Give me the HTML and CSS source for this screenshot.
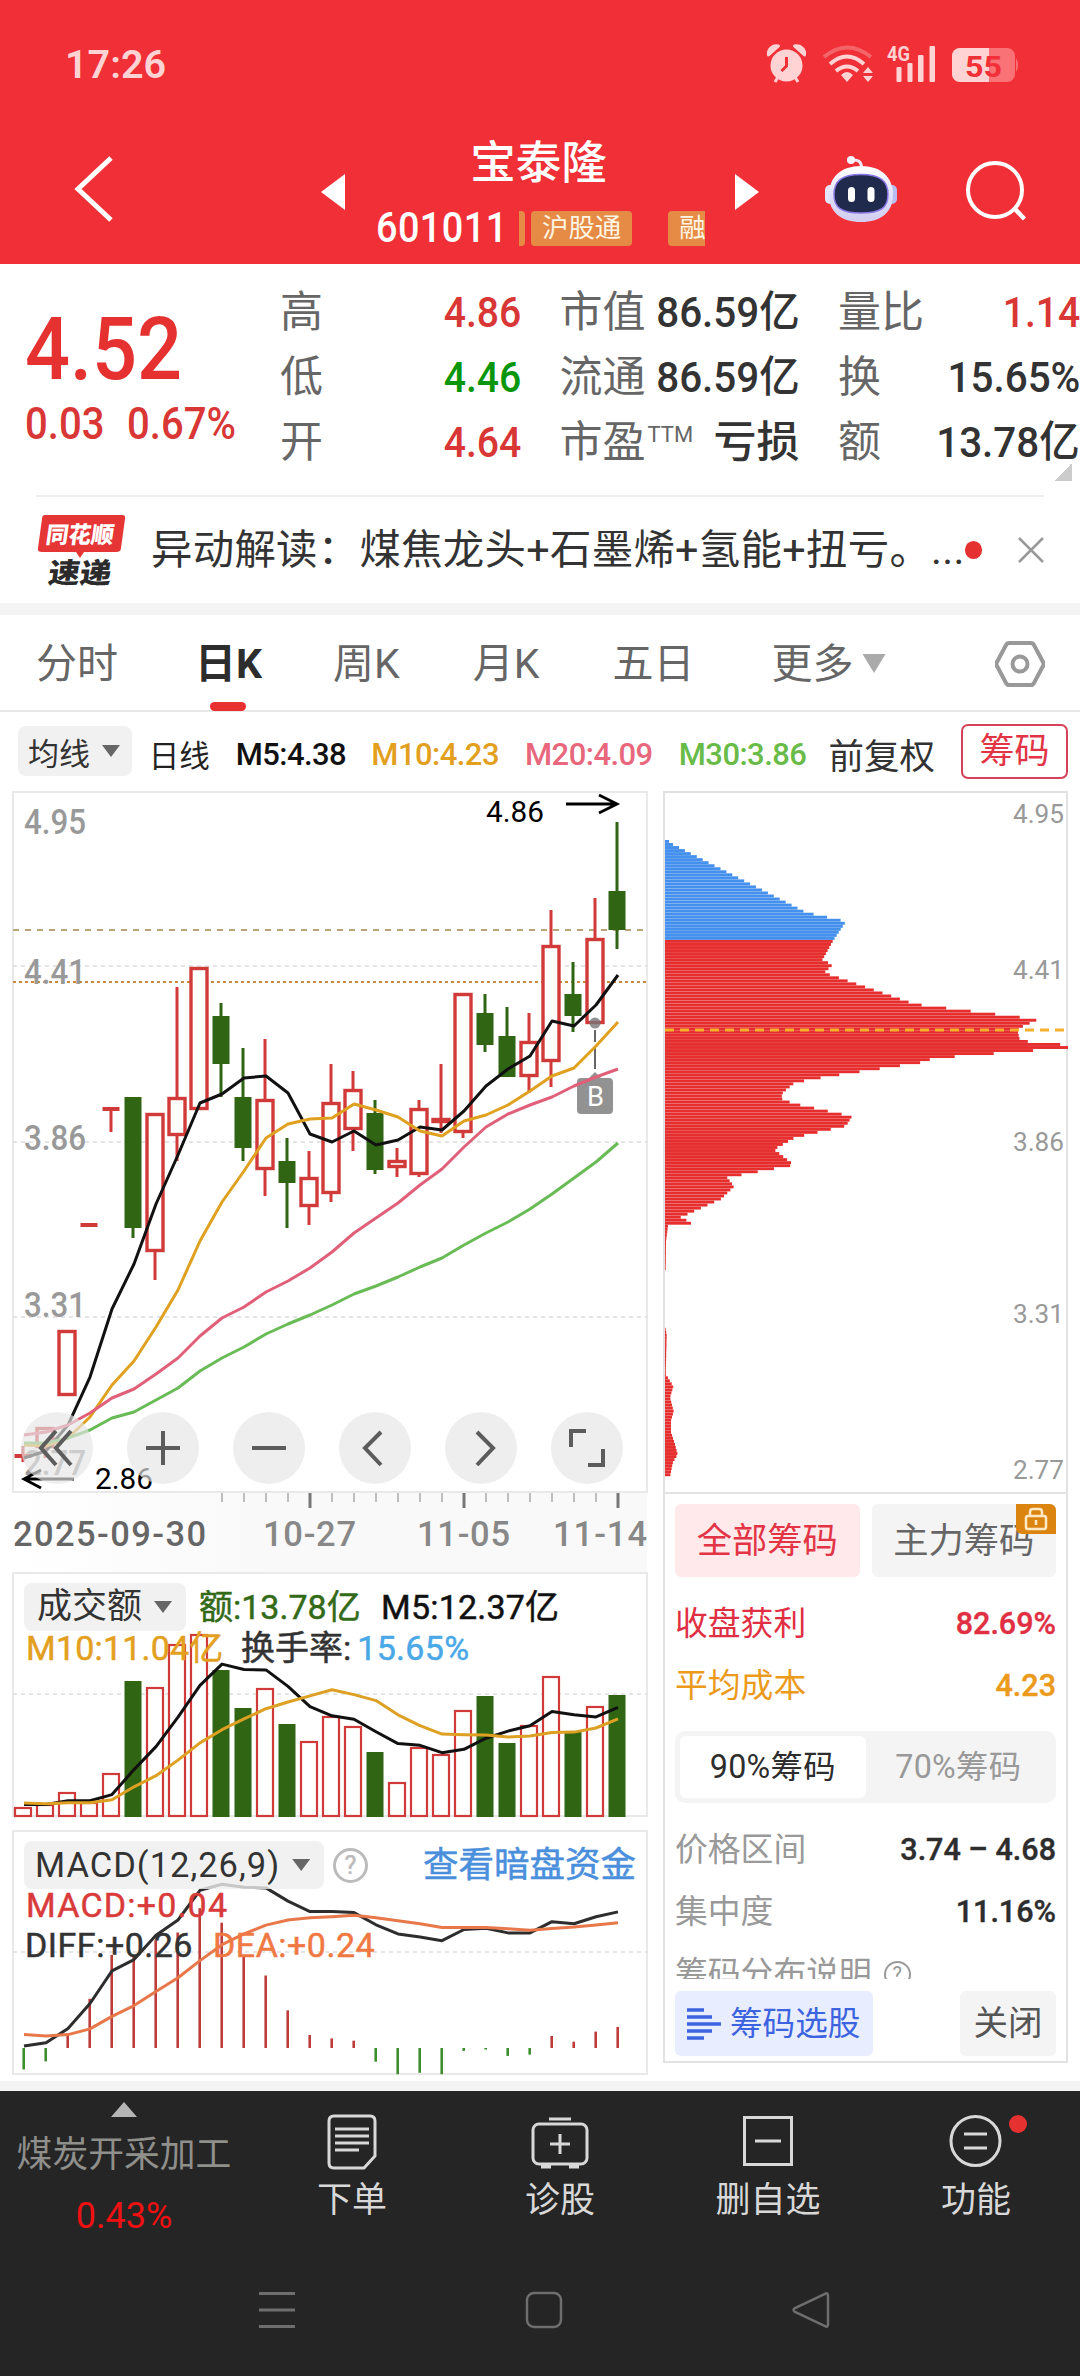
FILE: index.html
```html
<!DOCTYPE html>
<html lang="zh-CN">
<head>
<meta charset="utf-8">
<title>宝泰隆 601011</title>
<link rel="stylesheet" href="styles.css">
</head>
<body>
<header class="top">
  <div class="status">
    <span class="clock">17:26</span>
    <svg class="status-icons" viewBox="764 40 260 50" width="260" height="50">
      <g fill="#ffd3d4">
        <circle cx="786.500" cy="65.500" r="16"/>
        <path d="M768.500 55a8 8 0 0 1 10-9zM804.500 55a8 8 0 0 0-10-9zM778 77l-3 5M795 77l3 5" stroke="#ffd3d4" stroke-width="3" stroke-linejoin="round"/>
        <path d="M786.500 57v9l-5 5" fill="none" stroke="#f03036" stroke-width="3"/>
        <path d="M824 57q23-19 47 0" fill="none" stroke="#f4656a" stroke-width="4"/>
        <path d="M830 64q17-15 34 0M836 71q11-9 22 0" fill="none" stroke="#ffd3d4" stroke-width="4"/>
        <path d="M841 75q6-6 12 0l-6 7zM863 73l5-6 5 6zM863 76h10l-5 6z"/>
        <rect x="896.500" y="67" width="5" height="15" rx="1"/><rect x="907.500" y="63" width="5" height="19" rx="1"/><rect x="918" y="55" width="5.500" height="27" rx="1"/><rect x="929.500" y="46" width="5.500" height="36" rx="1"/>
        <text x="887" y="61" font-size="21" font-weight="700" textLength="23" lengthAdjust="spacingAndGlyphs">4G</text>
        <rect x="952" y="48" width="63" height="34" rx="8" fill="#f87276"/>
        <path d="M1016 58q4 7 0 14z" fill="#f87276"/>
        <path d="M960 48h29v34h-29a8 8 0 0 1-8-8v-18a8 8 0 0 1 8-8z"/>
        <text x="965" y="76.500" font-size="30" font-weight="700" fill="#f03036" textLength="37" lengthAdjust="spacingAndGlyphs">55</text>
      </g>
    </svg>
  </div>
  <div class="titlebar">
    <svg class="back" viewBox="0 0 40 70" width="40" height="70"><path d="M37 5L4 36l33 31" fill="none" stroke="#fff" stroke-width="5"/></svg>
    <svg class="prev" viewBox="0 0 24 36" width="24" height="36"><path d="M24 0v36L0 18z" fill="#fff"/></svg>
    <div class="stock">
      <h1>宝泰隆</h1>
      <div class="code-row">
        <span class="code">601011</span>
        <span class="tags"><i class="tag sliver"></i><i class="tag">沪股通</i><i class="tag last">融</i></span>
      </div>
    </div>
    <svg class="next" viewBox="0 0 24 36" width="24" height="36"><path d="M0 0v36l24-18z" fill="#fff"/></svg>
    <svg class="robot" viewBox="824 152 76 74" width="76" height="74">
      <defs><linearGradient id="shell" x1="0" y1="0" x2="0" y2="1"><stop offset="0" stop-color="#fff"/><stop offset=".6" stop-color="#dcdcf8"/><stop offset="1" stop-color="#d3cdf0"/></linearGradient></defs>
      <path d="M852 160q9-1 9.500 7" fill="none" stroke="#f3e6f3" stroke-width="3"/>
      <circle cx="851" cy="160" r="4" fill="#f6f2fc"/>
      <rect x="825" y="185" width="10" height="19" rx="5" fill="#e4e5fb"/><rect x="887" y="185" width="10" height="19" rx="5" fill="#babdf0"/>
      <path d="M861 166c20 0 32 11 32 29 0 17-12 27-32 27s-32-10-32-27c0-18 12-29 32-29z" fill="url(#shell)"/>
      <path d="M861 174.500c20 0 27 7 27 20s-7 18.500-27 18.500-27-5.500-27-18.500 7-20 27-20z" fill="#202a4d" stroke="#8a78e6" stroke-width="1.500"/>
      <rect x="848" y="187" width="7" height="15" rx="3.500" fill="#fff"/><rect x="867.500" y="187" width="7" height="15" rx="3.500" fill="#fff"/>
    </svg>
    <svg class="search" viewBox="0 0 64 64" width="64" height="64"><circle cx="31" cy="31" r="27" fill="none" stroke="#fff" stroke-width="4"/><path d="M50 49l10.500 11" stroke="#fff" stroke-width="4.500"/></svg>
  </div>
</header>

<section class="quote">
  <div class="price">
    <div class="last-price"><span class="din">4.52</span></div>
    <div class="change"><span class="din">0.03</span><span class="din">0.67%</span></div>
  </div>
  <dl class="stats">
    <div><dt>高</dt><dd class="up"><span class="din r">4.86</span></dd></div>
    <div><dt>市值</dt><dd><span class="din r w">86.59亿</span></dd></div>
    <div><dt>量比</dt><dd class="up"><span class="din r">1.14</span></dd></div>
    <div><dt>低</dt><dd class="down"><span class="din r">4.46</span></dd></div>
    <div><dt>流通</dt><dd><span class="din r w">86.59亿</span></dd></div>
    <div><dt>换</dt><dd><span class="din r w">15.65%</span></dd></div>
    <div><dt>开</dt><dd class="up"><span class="din r">4.64</span></dd></div>
    <div><dt>市盈<sup>TTM</sup></dt><dd class="loss">亏损</dd></div>
    <div><dt>额</dt><dd><span class="din r w">13.78亿</span></dd></div>
  </dl>
  <i class="corner"></i>
</section>

<section class="news">
  <svg viewBox="36 508 92 80" width="92" height="80">
    <path d="M45 513h77q4 0 3 4l-4 29q0 4-5 4H84l-4 6-4-6H42q-5 0-4-4l4-29q0-4 3-4z" fill="#e63535"/>
    <g font-weight="900" transform="skewX(-8)"><text x="121" y="541.500" font-size="23" fill="#fff" textLength="68" lengthAdjust="spacingAndGlyphs">同花顺</text><text x="129" y="581" font-size="28" fill="#2b2b2b" textLength="63" lengthAdjust="spacingAndGlyphs">速递</text></g>
  </svg>
  <p>异动解读：煤焦龙头+石墨烯+氢能+扭亏。...</p>
  <i class="dot"></i>
  <svg class="close" viewBox="0 0 26 26" width="26" height="26"><path d="M1 1l24 24M25 1L1 25" stroke="#999" stroke-width="2.500"/></svg>
</section>

<nav class="tabs">
  <a>分时</a><a class="on">日K</a><a>周K</a><a>月K</a><a>五日</a><a>更多<i class="caret big"></i></a>
  <svg viewBox="0 0 50 48" width="50" height="48"><path d="M14 3h22q2 0 3 2l9 17q1 2 0 4l-9 17q-1 2-3 2H14q-2 0-3-2L2 26q-1-2 0-4L11 5q1-2 3-2z" fill="none" stroke="#999" stroke-width="4"/><circle cx="25" cy="24" r="7.500" fill="none" stroke="#999" stroke-width="4"/></svg>
</nav>

<div class="ma-row">
  <span class="pick">均线<i class="caret"></i></span>
  <span class="period">日线</span>
  <b class="m5">M5:4.38</b><b class="m10">M10:4.23</b><b class="m20">M20:4.09</b><b class="m30">M30:3.86</b>
  <span class="adj">前复权</span>
  <button class="chip-btn">筹码</button>
</div>

<main class="charts">
  <div class="left">
    <div class="kline">
      <svg id="kline" viewBox="12 790 637 782" width="637" height="782"></svg>
      <div class="controls">
        <button><svg viewBox="0 0 72 72"><path d="M35 19L20 36l15 17M50 19L35 36l15 17"/></svg></button>
        <button><svg viewBox="0 0 72 72"><path d="M36 19v34M19 36h34"/></svg></button>
        <button><svg viewBox="0 0 72 72"><path d="M19 36h34"/></svg></button>
        <button><svg viewBox="0 0 72 72"><path d="M42 20L26 36l16 17"/></svg></button>
        <button><svg viewBox="0 0 72 72"><path d="M32 20l16 16-16 17"/></svg></button>
        <button><svg viewBox="0 0 72 72"><path d="M20 35V19h15M37 53h15V37"/></svg></button>
      </div>
    </div>
    <div class="sub volume">
      <svg id="volume" viewBox="12 1572 637 246" width="637" height="246"></svg>
      <div class="legend">
        <p><span class="pick">成交额<i class="caret"></i></span><span class="c-green">额:13.78亿</span><span class="c-black">M5:12.37亿</span></p>
        <p class="row2"><span class="c-gold">M10:11.04亿</span><span class="turn">换手率:<em>15.65%</em></span></p>
      </div>
    </div>
    <div class="sub macd">
      <svg id="macd" viewBox="12 1830 637 246" width="637" height="246"></svg>
      <div class="legend">
        <p><span class="pick wide">MACD(12,26,9)<i class="caret"></i></span><span class="help">?</span><a>查看暗盘资金</a></p>
        <p class="row2 c-red">MACD:+0.04</p>
        <p class="row3"><span>DIFF:+0.26</span><span class="c-orange">DEA:+0.24</span></p>
      </div>
    </div>
  </div>
  <aside class="chips">
    <svg id="chips" viewBox="664 792 403 699" width="403" height="699"></svg>
    <div class="chip-body">
      <div class="chip-tabs"><span class="on">全部筹码</span><span>主力筹码<i class="lock"><svg viewBox="0 0 40 30" width="40" height="30"><rect x="10" y="12" width="20" height="13" rx="2" fill="none" stroke="#ffe9c4" stroke-width="2.500"/><path d="M14 12V8q0-3 3-3h6q3 0 3 3v4M20 16v5" fill="none" stroke="#ffe9c4" stroke-width="2.500"/></svg></i></span></div>
      <div class="kv c-crimson"><span>收盘获利</span><b>82.69%</b></div>
      <div class="kv c-amber"><span>平均成本</span><b>4.23</b></div>
      <div class="seg"><span class="on">90%筹码</span><span>70%筹码</span></div>
      <div class="kv"><span>价格区间</span><b>3.74 – 4.68</b></div>
      <div class="kv"><span>集中度</span><b>11.16%</b></div>
      <div class="kv clip"><span>筹码分布说明<i class="help sm">?</i></span></div>
    </div>
    <div class="chip-foot">
      <span class="select"><svg viewBox="0 0 34 32" width="34" height="32"><path d="M0 2h17M0 9h25M0 16h34M0 23h25M0 30h17" stroke="#3c63e0" stroke-width="3.500"/></svg>筹码选股</span>
      <span class="shut">关闭</span>
    </div>
  </aside>
</main>

<footer class="bottom">
  <div class="menu">
    <div class="sector"><i class="tri"></i><span>煤炭开采加工</span><b>0.43%</b></div>
    <div class="item"><svg viewBox="0 0 60 60" width="60" height="60"><g fill="none" stroke="#d8d8d8" stroke-width="3"><path d="M12 5h36q5 0 5 5v35L42 57H12q-5 0-5-5V10q0-5 5-5z"/><path d="M13 18h34M13 25h34M13 32h34M13 39h24"/></g></svg>下单</div>
    <div class="item"><svg viewBox="0 0 60 60" width="60" height="60"><g fill="none" stroke="#d8d8d8" stroke-width="3"><rect x="3" y="13" width="54" height="40" rx="6"/><path d="M19 8h22M30 23v20M20 33h20"/><path d="M11 55.500h10M39 55.500h10" stroke-width="4"/></g></svg>诊股</div>
    <div class="item"><svg viewBox="0 0 60 60" width="60" height="60"><g fill="none" stroke="#d8d8d8" stroke-width="3"><rect x="6.500" y="6.500" width="47" height="47"/><path d="M17 30h26"/></g></svg>删自选</div>
    <div class="item"><svg viewBox="0 0 60 60" width="60" height="60"><g fill="none" stroke="#d8d8d8" stroke-width="3"><circle cx="29.500" cy="30" r="24.500"/><path d="M18 23h23M18 37h23"/></g></svg>功能<i class="badge"></i></div>
  </div>
  <div class="sysnav">
    <svg viewBox="0 0 38 40" width="38" height="40"><path d="M1 3.500h36M1 20h36M1 36.500h36" stroke="#6e6e6e" stroke-width="3"/></svg>
    <svg viewBox="0 0 38 40" width="38" height="40"><rect x="2" y="3" width="34" height="34" rx="7" fill="none" stroke="#6e6e6e" stroke-width="2.500"/></svg>
    <svg viewBox="0 0 38 40" width="38" height="40"><path d="M33 4q3-2 3 2v28q0 4-3 2L3 22q-3-2 0-4z" fill="none" stroke="#6e6e6e" stroke-width="2.500"/></svg>
  </div>
</footer>
<script src="charts.js"></script>
</body>
</html>
```
FILE: styles.css
```css
* { box-sizing: border-box; margin: 0; padding: 0; }
body { width: 1080px; height: 2376px; overflow: hidden; background: #fff; color: #333; font-family: Roboto, "Noto Sans CJK SC", sans-serif; }
svg { display: block; flex: none; }
i, em { font-style: normal; }
button { border: 0; background: none; font: inherit; }
.din { display: inline-block; transform: scaleX(.91); transform-origin: left; }
.din.r { transform-origin: right; }
.din.w { transform: scaleX(.94); }

.top { height: 264px; background: #f03036; color: #fff; }
.status { height: 130px; padding: 40px 56px 0 65px; display: flex; justify-content: space-between; }
.clock { font-size: 39.5px; line-height: 49px; font-weight: 600; color: #ffd3d4; }
.titlebar { display: flex; height: 134px; align-items: flex-start; }
.back { margin: 23px 0 0 74px; }
.prev { margin: 44px 0 0 207px; }
.stock { width: 390px; padding: 10px 34px 0 31px; }
.stock h1 { font-size: 45.5px; line-height: 48px; font-weight: 500; text-align: center; }
.code-row { display: flex; height: 42px; margin-top: 19px; align-items: center; }
.code { width: 143px; font-size: 42px; font-weight: 500; line-height: 42px; letter-spacing: .5px; transform: scaleX(.9); transform-origin: left; }
.tags { display: flex; flex: none; width: 186px; overflow: hidden; margin-top: 1px; }
.tag { flex: none; height: 35px; line-height: 35px; padding: 0 11px; margin-right: 36px; font-size: 26.4px; color: #fff5e2; background: #e58b46; border-radius: 4px; }
.tag.sliver { width: 6px; padding: 0; margin-right: 6px; border-radius: 0 4px 4px 0; }
.tag.last { margin-right: 0; padding-right: 6px; }
.next { margin: 44px 0 0 0; }
.robot { margin: 22px 0 0 65px; }
.search { margin: 29px 0 0 64px; }

.quote { position: relative; display: flex; height: 231px; padding-top: 15px; }
.price { width: 281px; padding-left: 25px; color: #e63131; font-weight: 500; white-space: nowrap; }
.last-price { font-size: 88px; line-height: 88px; height: 88px; margin-top: 26px; }
.last-price .din { transform: scaleX(.9); }
.change { font-size: 44px; line-height: 50px; margin-top: 6px; }
.change .din { width: 102px; color: #d93636; }
.stats { width: 799px; display: grid; grid-template-columns: 240px 239px 241px; column-gap: 39.5px; grid-auto-rows: 65px; }
.stats div { display: flex; justify-content: space-between; align-items: center; white-space: nowrap; }
.stats dt { font-size: 43px; line-height: 58px; margin-left: -1px; color: #666; }
.stats dd { font-size: 43px; line-height: 58px; font-weight: 500; color: #333; }
.stats sup { font-size: 22px; line-height: 1; vertical-align: 15px; margin-left: 2px; }
.stats .up { color: #d93636; } .stats .down { color: #0a960a; }
.stats .loss { font-weight: 500; }
.corner { position: absolute; right: 8px; bottom: 14px; width: 18px; height: 18px; background: linear-gradient(135deg, transparent 50%, #ccc 50%); }

.news { display: flex; align-items: center; height: 108px; margin: 0 36px; border-top: 2px solid #eee; }
.news p { width: 815px; margin-left: 23px; font-size: 41.4px; line-height: 60px; white-space: nowrap; letter-spacing: .3px; }
.dot { width: 18px; height: 18px; border-radius: 50%; background: #e63131; }
.close { margin-left: 36px; }

.tabs { display: flex; align-items: center; height: 109px; border-top: 12px solid #f4f4f4; border-bottom: 2px solid #e8e8e8; font-size: 41px; color: #666; padding: 2px 0 0 36px; line-height: 56px; }
.tabs a { position: relative; margin-right: 77px; display: flex; align-items: center; white-space: nowrap; }
.tabs a:nth-child(2) { margin-right: 71px; }
.tabs a:nth-child(3), .tabs a:nth-child(4) { margin-right: 73px; }
.tabs a:nth-child(5) { margin-right: 77px; }
.tabs a:nth-child(6) { margin-right: 109px; }
.tabs .on { color: #2d2d2d; font-weight: 700; }
.tabs .on::after { content: ""; position: absolute; left: 50%; margin-left: -19px; bottom: -19px; width: 36px; height: 9px; border-radius: 5px; background: #e93030; }
.caret { display: inline-block; width: 18px; height: 12px; margin-left: 12px; background: #666; clip-path: polygon(0 0, 100% 0, 50% 100%); }
.caret.big { width: 23px; height: 19px; margin-left: 9px; background: #aaa; }

.ma-row { display: flex; align-items: center; height: 78px; padding: 0 12px 0 18px; font-size: 31px; white-space: nowrap; }
.pick { display: inline-flex; align-items: center; background: #f1f1f1; border-radius: 8px; }
.ma-row .pick { width: 114px; height: 50px; padding-left: 10px; }
.ma-row .period { margin-left: 17px; width: 87px; font-size: 30.5px; padding-top: 5px; color: #222; }
.ma-row b { font-weight: 500; width: 154px; letter-spacing: -.55px; padding-top: 6px; }
.ma-row .m5 { width: 136px; color: #111; } .m10 { color: #e3a01f; } .m20 { color: #e8677d; } .m30 { color: #69bb48; }
.ma-row .m30 { width: 150px; }
.ma-row .adj { width: 133px; font-size: 35.5px; padding-top: 5px; }
.chip-btn { width: 107px; height: 55px; border: 2px solid #d5425a; border-radius: 7px; color: #e23445; font-size: 35px; line-height: 51px; }

.charts { display: flex; height: 1291px; }
.left { width: 649px; padding-left: 12px; }
.kline { position: relative; height: 782px; }
.controls { position: absolute; left: 9px; top: 622px; width: 602px; display: flex; justify-content: space-between; }
.controls button { width: 72px; height: 72px; border-radius: 50%; background: rgba(229, 229, 229, .667); }
.controls svg { width: 72px; height: 72px; fill: none; stroke: #5c5c5c; stroke-width: 4; }
.sub { position: relative; height: 246px; }
.volume { margin-bottom: 12px; }
.legend { position: absolute; left: 12px; top: 11px; width: 614px; font-size: 34px; line-height: 40px; font-weight: 400; -webkit-text-stroke: .5px; }
.legend p { display: flex; align-items: center; white-space: nowrap; }
.legend .pick { width: 162px; height: 48px; padding-left: 13px; font-size: 35px; background: rgba(238, 238, 238, .8); -webkit-text-stroke: 0; }
.legend .pick.wide { width: 300px; padding-left: 11px; font-size: 34.5px; letter-spacing: 1px; }
.legend .c-green { margin-left: 13px; width: 182px; }
.legend .c-black { letter-spacing: .2px; }
.legend .row2 { padding-left: 2px; margin-top: -3px; }
.macd .row2 { margin-top: -4px; } .legend .row3 { padding-left: 1px; letter-spacing: .5px; }
.row3 span:first-child { width: 188px; }
.c-gold { width: 215px; color: #e3a01f; letter-spacing: .2px; }
.turn em { color: #4aa8e6; margin-left: 6px; letter-spacing: .3px; }
.c-green { color: #336a18; } .c-black { color: #111; } .c-red { color: #d93a3a; letter-spacing: 1.2px; } .c-orange { color: #f07843; }
.help { width: 35px; height: 35px; margin-left: 9px; border: 3px solid #bbb; border-radius: 50%; color: #bbb; font-size: 25px; line-height: 30px; text-align: center; }
.legend a { margin-left: auto; margin-right: 2px; color: #4a8fdc; font-size: 35.5px; }

.chips { width: 405px; height: 1272px; margin: 1px 0 0 14px; border: 2px solid #e2e2e2; }
.chip-body { height: 487px; border-top: 2px solid #e2e2e2; padding: 10px 10px 0; overflow: hidden; }
.chip-tabs { display: flex; gap: 12px; margin-bottom: 16px; }
.chip-tabs span { position: relative; flex: 1; height: 73px; line-height: 75px; text-align: center; border-radius: 6px; background: #f4f4f4; color: #666; font-size: 35.3px; }
.chip-tabs .on { background: #ffe9eb; color: #e23445; }
.lock { position: absolute; right: 0; top: 0; width: 40px; height: 30px; background: #dc8410; border-radius: 0 6px 0 6px; }
.kv { display: flex; justify-content: space-between; align-items: center; height: 62px; line-height: 48px; font-size: 32.8px; color: #999; white-space: nowrap; }
.kv b { font-size: 30.5px; font-weight: 500; color: #2d2d2d; -webkit-text-stroke: .4px; }
.kv.c-crimson, .c-crimson b { color: #e02f42; } .kv.c-amber, .c-amber b { color: #ec9a1c; }
.kv span { display: flex; align-items: center; }
.help.sm { width: 27px; height: 27px; margin-left: 12px; border: 2px solid #999; color: #999; font-size: 20px; line-height: 23px; }
.seg { display: flex; height: 72px; margin: 14px 0 16px; padding: 5px; background: #f4f4f4; border-radius: 10px; font-size: 32.3px; line-height: 63px; letter-spacing: .3px; text-align: center; color: #999; }
.seg span { flex: 1; } .seg .on { background: #fff; border-radius: 6px; color: #2d2d2d; }
.chip-foot { display: flex; justify-content: space-between; padding: 12px 10px 0 10px; }
.chip-foot span { height: 65px; border-radius: 6px; line-height: 64px; }
.select { display: flex; align-items: center; width: 198px; padding-left: 12px; gap: 9px; background: #e8edff; color: #3c63e0; font-size: 32.6px; }
.shut { width: 96px; text-align: center; background: #f4f4f4; color: #555; font-size: 34.5px; }

.bottom { height: 295px; border-top: 10px solid #f4f4f4; background: #252525; color: #d8d8d8; }
.menu { display: grid; grid-template-columns: 248px repeat(4, 208px); height: 180px; }
.sector { display: flex; flex-direction: column; align-items: center; padding-top: 11px; }
.tri { width: 26px; height: 15px; background: #b5b5b5; clip-path: polygon(50% 0, 100% 100%, 0 100%); }
.sector span { font-size: 35.8px; line-height: 50px; margin-top: 13px; color: #8f8f8c; white-space: nowrap; }
.sector b { font-size: 36px; line-height: 50px; margin-top: 11px; font-weight: 400; color: #ee1111; }
.item { position: relative; display: flex; flex-direction: column; align-items: center; padding-top: 20px; font-size: 35px; line-height: 50px; }
.item svg { margin-bottom: 5px; }
.badge { position: absolute; left: 137px; top: 24px; width: 18px; height: 18px; border-radius: 50%; background: #e63131; }
.sysnav { display: flex; justify-content: space-between; padding: 19px 250px 0 258px; }
```
FILE: charts.js
```js
const RED = '#d03b39', GREEN = '#2f6513', STEP = 22, X0 = 23;
const cx = i => X0 + i * STEP;
const el = {
  line: (x1, y1, x2, y2, c, w, d = '') => `<line x1="${x1}" y1="${y1}" x2="${x2}" y2="${y2}" stroke="${c}" stroke-width="${w}" stroke-dasharray="${d}"/>`,
  rect: (x, y, w, h, f, s = 'none', sw = 0) => `<rect x="${x}" y="${y}" width="${w}" height="${h}" fill="${f}" stroke="${s}" stroke-width="${sw}"/>`,
  poly: (ys, c) => `<polyline points="${ys.map((y, i) => cx(i) + 1 + ',' + y).join(' ')}" fill="none" stroke="${c}" stroke-width="3" stroke-linejoin="round"/>`,
  text: (x, y, t, size, c, len, w = 400, adj = 'spacingAndGlyphs') => `<text x="${x}" y="${y}" font-size="${size}" fill="${c}" font-weight="${w}" textLength="${len}" lengthAdjust="${adj}">${t}</text>`
};

/* Daily candles: [direction, high, top, bottom, low] */
const candles = [
  [1,1446,1455,1457,1462],[1,1427,1427,1448,1458],[1,1330,1330,1396,1396],[1,1223,1224,1226,1227],[1,1108,1108,1110,1132],
  [0,1097,1097,1228,1238],[1,1113,1113,1252,1280],[1,987,1097,1136,1161],[1,967,967,1110,1110],[0,1003,1016,1064,1097],
  [0,1048,1097,1148,1161],[1,1039,1099,1170,1196],[0,1138,1161,1183,1228],[1,1151,1177,1207,1225],[1,1064,1102,1194,1202],
  [1,1071,1089,1130,1151],[0,1100,1113,1170,1174],[1,1148,1160,1168,1177],[1,1100,1108,1175,1177],[1,1064,1118,1123,1133],
  [1,993,993,1133,1138],[0,994,1013,1045,1052],[0,1007,1036,1077,1077],[1,1013,1041,1077,1093],[1,910,945,1062,1087],
  [0,962,994,1016,1032],[1,898,938,1024,1024],[0,822,891,930,949]
];
const ma = {
  '#111': [1458,1451,1425,1377,1309,1264,1204,1155,1103,1094,1078,1076,1093,1134,1142,1131,1145,1140,1127,1130,1111,1086,1069,1056,1021,1026,1005,975],
  '#e0a020': [1445,1446,1438,1417,1385,1361,1327,1290,1241,1202,1171,1138,1124,1119,1118,1104,1110,1117,1131,1136,1121,1115,1105,1091,1076,1068,1046,1022],
  '#e0607a': [1435,1432,1425,1413,1398,1389,1374,1358,1336,1318,1307,1292,1281,1268,1252,1233,1218,1203,1185,1169,1147,1127,1114,1105,1097,1086,1077,1069],
  '#68bb55': [1443,1443,1438,1430,1418,1412,1400,1388,1371,1358,1347,1334,1324,1315,1305,1294,1286,1277,1267,1258,1245,1233,1222,1209,1194,1178,1162,1143]
};
let s = '<defs><linearGradient id="fade"><stop offset="0" stop-color="#fff"/><stop offset=".4" stop-color="#f9f9f9"/></linearGradient></defs>';
s += '<rect x="13" y="1493" width="634" height="79" fill="url(#fade)"/>';
s += el.rect(13, 792, 634, 700, '#fff', '#e9e9e9', 2);
[966, 1142, 1317].forEach(y => s += el.line(13, y, 647, y, '#dcdcdc', 1.3, '4 4'));
s += el.line(13, 930, 647, 930, '#b9a27c', 2, '6 6') + el.line(13, 982, 647, 982, '#c98a3c', 2.2, '3 3');
[[834,'4.95'],[984,'4.41'],[1150,'3.86'],[1317,'3.31'],[1475,'2.77']].forEach(([y, t]) => s += el.text(24, y, t, 34.5, '#999', 62, 500));
candles.forEach(([up, h, t, b, l], i) => {
  const x = cx(i), c = up ? RED : GREEN;
  if (h < t) s += el.line(x, h, x, t, c, 3);
  if (l > b) s += el.line(x, b, x, l, c, 3);
  if (!up) s += el.rect(x - 8.5, t, 17, b - t, c);
  else if (b - t < 4) s += el.rect(x - 8.5, t - 1, 17, 4, c);
  else s += el.rect(x - 8, t + 1.5, 16, b - t - 3, i === 19 ? c : '#fff', c, 3.4);
});
s += '<circle cx="595" cy="1023" r="5.5" fill="#777" opacity=".8"/>' + el.line(595, 1030, 595, 1075, '#666', 2, '12 5 22 4');
s += '<path d="M588 1079l7-7 7 7z" fill="#929292"/><rect x="577" y="1078" width="36" height="36" rx="4" fill="#929292"/>';
s += el.text(587, 1106, 'B', 28, '#fff', 17);
for (const c in ma) s += el.poly(ma[c], c);
s += '<path d="M566 804h50M599 795l18 9-18 9M74 1479H24M41 1470l-17 9 17 9" fill="none" stroke="#000" stroke-width="2.8"/>';
s += el.text(486, 822, '4.86', 29.5, '#000', 58) + el.text(95, 1489, '2.86', 29.5, '#000', 58);
for (let i = 9; i < 28; i++) {
  const major = [13, 20, 27].includes(i);
  s += el.line(cx(i) + 1, 1493, cx(i) + 1, major ? 1508 : 1502, major ? '#777' : '#aaa', major ? 3 : 1.5);
}
[[13,'2025-09-30',193,'#666'],[263,'10-27',93,'#888'],[417,'11-05',93,'#888'],[553,'11-14',94,'#888']]
  .forEach(([x, t, w, c]) => s += el.text(x, 1546, t, 34.5, c, w, 500, 'spacing'));
document.getElementById('kline').innerHTML = s;

/* Turnover bars and their moving averages */
const up = candles.map(c => c[0]);
const vol = [1808,1805,1793,1803,1774,1681,1688,1645,1635,1670,1708,1689,1724,1742,1717,1727,1752,1783,1748,1755,1711,1696,1743,1726,1677,1732,1707,1695];
const scale = ys => ys.map(y => +(1560 + y / 2.958).toFixed(1));
s = el.rect(13, 1573, 634, 243, '#fff', '#e9e9e9', 2) + el.line(13, 1694, 647, 1694, '#ddd', 1.3, '4 4');
vol.forEach((y, i) => s += up[i] ? el.rect(cx(i) - 8, y, 16, 1816 - y, '#fff', RED, 2.2) : el.rect(cx(i) - 8.5, y, 17, 1817 - y, GREEN));
s += el.poly(scale([723,723,712,712,694,620,552,465,371,308,324,325,374,434,461,471,508,543,548,570,560,527,506,490,448,458,464,436]), '#111');
s += el.poly(scale([719,721,718,718,709,671,638,592,541,502,470,440,420,402,384,398,416,458,490,515,517,518,524,521,510,509,497,470]), '#dda022');
document.getElementById('volume').innerHTML = s;

/* MACD histogram, DIFF and DEA */
s = el.rect(13, 1831, 634, 243, '#fff', '#e9e9e9', 2) + el.line(13, 1952, 647, 1952, '#ddd', 1.3, '4 4');
scale([1507,1483,1405,1298,1168,1172,1125,1102,1030,1073,1172,1229,1332,1405,1415,1422,1484,1521,1517,1521,1452,1448,1467,1463,1408,1425,1395,1381])
  .forEach((y, i) => s += el.line(cx(i) + .7, 2048, cx(i) + .7, y, y < 2048 ? '#bf3c3c' : '#3d8f2d', 2.6));
s += el.poly(scale([1438,1428,1386,1312,1215,1182,1110,1065,977,959,968,970,1009,1040,1040,1043,1079,1106,1115,1126,1093,1089,1103,1103,1070,1076,1055,1041]), '#2d2d2d');
s += el.poly(scale([1404,1408,1404,1387,1350,1318,1276,1236,1185,1138,1106,1080,1065,1058,1055,1051,1058,1067,1076,1087,1087,1087,1091,1095,1090,1086,1080,1073]), '#e8784a');
document.getElementById('macd').innerHTML = s;

/* Cost distribution: [y, width] knots, one bar every 3px between them */
const knots = [[839,4],[842,8],[910,141],[919,181],[938.4,168],[958,157],[962,168],[970.5,159],[973.3,168],[1001.8,250],[1017,373],[1025.6,354],[1030,353],[1038,355],[1041,379],[1042.5,403],[1045.6,403],[1047,382],[1050,343],[1053,304],[1056,266],[1059,263],[1065,223],[1074,163],[1080,130],[1090,118],[1096,116],[1101,128],[1114,187],[1123.4,181],[1135,130],[1147,109],[1162.5,129],[1175,62],[1184,69],[1196.5,56],[1216,13],[1218.7,26],[1221.8,26],[1223.5,3],[1239,1],[1267,.7],[1270,0],[1322,0],[1333,1.7],[1372,.7],[1375.5,3],[1384,8.3],[1395,5],[1409,8.7],[1418,6],[1430,6],[1441,9.7],[1452,12.7],[1459.5,8],[1474,5]];
s = '';
for (let y = 839; y < 1474; y += 3.03) {
  let k = 1;
  while (k < knots.length - 1 && knots[k][0] < y) k++;
  const [y0, w0] = knots[k - 1], [y1, w1] = knots[k];
  const w = w0 + (w1 - w0) * (y - y0) / (y1 - y0);
  if (w > .3) s += el.rect(664, y.toFixed(2), w.toFixed(1), 2.92, y < 937.5 ? '#4590ec' : '#e62e2e');
}
s += el.line(664, 1029, 1064, 1029, '#f6b02c', 3, '9 6');
[[822,'4.95'],[978,'4.41'],[1150,'3.86'],[1322,'3.31'],[1478,'2.77']].forEach(([y, t]) => s += el.text(1012, y, t, 26, '#999', 51));
document.getElementById('chips').innerHTML = s;
```
